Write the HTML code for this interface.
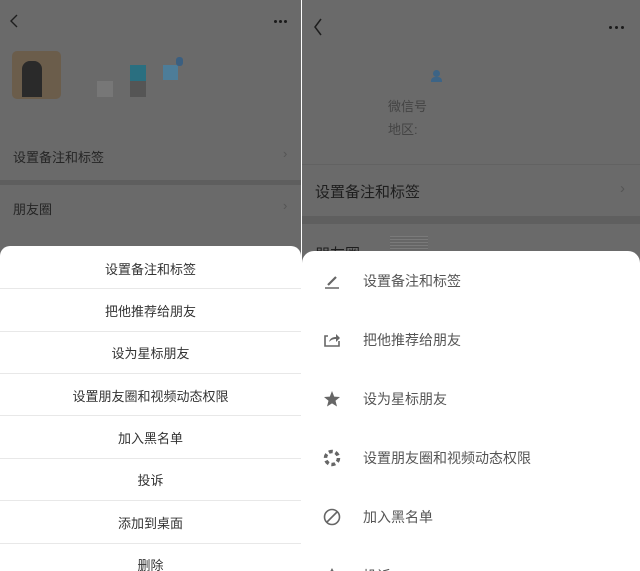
<!DOCTYPE html>
<html><head><meta charset="utf-8"><style>
*{margin:0;padding:0;box-sizing:border-box}
body{width:640px;height:571px;overflow:hidden;background:#fff;font-family:"Liberation Sans","Noto Sans CJK SC",sans-serif;position:relative}
.p{position:absolute;top:0;height:571px;background:#6a6a6a;overflow:hidden}
.abs{position:absolute}
.sheet{position:absolute;background:#fff;border-radius:10px 10px 0 0}
.row{position:absolute;left:0;right:0;text-align:center;font-size:13px;color:#333}
.div{position:absolute;left:0;right:0;height:1px;background:#e8e8e8}
.ri{position:absolute;left:0;right:0;height:20px}
.ri span{position:absolute;left:61px;top:0;font-size:14px;color:#555;line-height:20px}
.ri svg{position:absolute;left:21px;top:1px}
.dot{position:absolute;width:3px;height:3px;border-radius:50%;background:#1a1a1a}
</style></head><body>
<div class="p" style="left:0;width:301px">
 <svg class="abs" style="left:9px;top:14px" width="10" height="14" viewBox="0 0 10 14"><path d="M8 1L2 7L8 13" fill="none" stroke="#1e1e1e" stroke-width="1.4"/></svg>
 <div class="dot" style="left:274px;top:20px"></div><div class="dot" style="left:279px;top:20px"></div><div class="dot" style="left:284px;top:20px"></div>
 <div class="abs" style="left:12px;top:51px;width:49px;height:48px;border-radius:5px;background:#6b5d4b"><div class="abs" style="left:10px;top:10px;width:20px;height:36px;background:#2a2a2a;border-radius:8px 8px 0 0"></div></div>
 <div class="abs" style="left:97px;top:81px;width:16px;height:16px;background:#777"></div>
 <div class="abs" style="left:130px;top:65px;width:16px;height:16px;background:#2a6f80"></div>
 <div class="abs" style="left:130px;top:81px;width:16px;height:16px;background:#555"></div>
 <div class="abs" style="left:163px;top:65px;width:15px;height:15px;background:#4d7d99"></div>
 <div class="abs" style="left:176px;top:57px;width:7px;height:9px;background:#3b5f80;border-radius:3px"></div>
 <div class="abs" style="left:13px;top:147px;font-size:13px;color:#252525">设置备注和标签</div>
 <div class="abs" style="left:283px;top:146px;font-size:13px;color:#555">›</div>
 <div class="abs" style="left:0;top:180px;width:301px;height:5px;background:#5e5e5e"></div>
 <div class="abs" style="left:13px;top:199px;font-size:13px;color:#252525">朋友圈</div>
 <div class="abs" style="left:283px;top:198px;font-size:13px;color:#555">›</div>
 <div class="sheet" style="left:0;top:246px;width:301px;height:330px">
  <div class="row" style="top:13px">设置备注和标签</div><div class="div" style="top:42px"></div>
  <div class="row" style="top:55px">把他推荐给朋友</div><div class="div" style="top:85px"></div>
  <div class="row" style="top:97px">设为星标朋友</div><div class="div" style="top:127px"></div>
  <div class="row" style="top:140px">设置朋友圈和视频动态权限</div><div class="div" style="top:169px"></div>
  <div class="row" style="top:182px">加入黑名单</div><div class="div" style="top:212px"></div>
  <div class="row" style="top:224px">投诉</div><div class="div" style="top:254px"></div>
  <div class="row" style="top:267px">添加到桌面</div><div class="div" style="top:297px"></div>
  <div class="row" style="top:309px">删除</div>
 </div>
</div>
<div class="p" style="left:302px;width:338px">
 <svg class="abs" style="left:11px;top:18px" width="10" height="18" viewBox="0 0 10 18"><path d="M8 1L2 9L8 17" fill="none" stroke="#1e1e1e" stroke-width="1.5"/></svg>
 <div class="dot" style="left:307px;top:26px"></div><div class="dot" style="left:313px;top:26px"></div><div class="dot" style="left:319px;top:26px"></div>
 <div class="abs" style="left:129px;top:70px;width:10px;height:13px"><div style="width:7px;height:7px;margin-left:2px;border-radius:50%;background:#3c6486"></div><div style="width:11px;height:5px;border-radius:4px 4px 0 0;background:#3c6486"></div></div>
 <div class="abs" style="left:86px;top:96px;font-size:13px;color:#444">微信号</div>
 <div class="abs" style="left:86px;top:119px;font-size:13px;color:#444">地区:</div>
 <div class="abs" style="left:0;top:164px;width:338px;height:1px;background:#626262"></div>
 <div class="abs" style="left:13px;top:181px;font-size:15px;color:#1e1e1e">设置备注和标签</div>
 <div class="abs" style="left:318px;top:180px;font-size:15px;color:#555">›</div>
 <div class="abs" style="left:0;top:216px;width:338px;height:8px;background:#5f5f5f"></div>
 <div class="abs" style="left:13px;top:243px;font-size:15px;color:#1e1e1e">朋友圈</div>
 <div class="abs" style="left:88px;top:236px;width:38px;height:14px;background:repeating-linear-gradient(#7a7a7a 0 1px,#666 1px 3px)"></div>
 <div class="sheet" style="left:0;top:251px;width:338px;height:330px;border-radius:12px 12px 0 0">
  <div class="ri" style="top:20px"><svg width="18" height="18" viewBox="0 0 18 18"><path d="M2 16H16" stroke="#666" stroke-width="1.5"/><path d="M5 13L13 5" stroke="#666" stroke-width="2.2"/></svg><span>设置备注和标签</span></div>
  <div class="ri" style="top:79px"><svg width="18" height="18" viewBox="0 0 18 18"><path d="M5 5H2V15H16V10" fill="none" stroke="#666" stroke-width="1.6"/><path d="M6 11C7 7 10 6 13 6V3L17 7L13 11V8C10 8 8 9 6 11Z" fill="#666"/></svg><span>把他推荐给朋友</span></div>
  <div class="ri" style="top:138px"><svg width="18" height="18" viewBox="0 0 18 18"><path d="M9 1L11.2 6.6L17 7L12.5 10.8L14 16.5L9 13.4L4 16.5L5.5 10.8L1 7L6.8 6.6Z" fill="#666"/></svg><span>设为星标朋友</span></div>
  <div class="ri" style="top:197px"><svg width="18" height="18" viewBox="0 0 18 18"><circle cx="9" cy="9" r="6.5" fill="none" stroke="#666" stroke-width="3.5" stroke-dasharray="4 2.8"/></svg><span>设置朋友圈和视频动态权限</span></div>
  <div class="ri" style="top:256px"><svg width="18" height="18" viewBox="0 0 18 18"><circle cx="9" cy="9" r="7.5" fill="none" stroke="#666" stroke-width="1.6"/><path d="M4 14L14 4" stroke="#666" stroke-width="1.6"/></svg><span>加入黑名单</span></div>
  <div class="ri" style="top:315px"><svg width="18" height="18" viewBox="0 0 18 18"><path d="M9 1L17 16H1Z" fill="#666"/></svg><span>投诉</span></div>
 </div>
</div>
</body></html>
